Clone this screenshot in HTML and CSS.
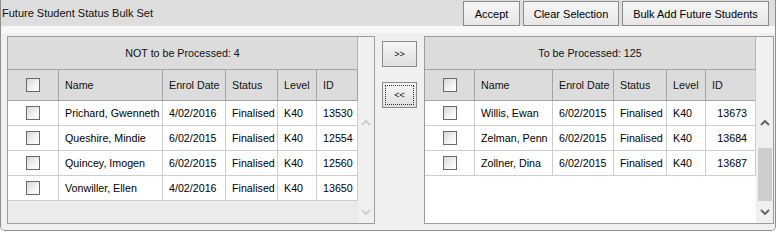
FILE: index.html
```html
<!DOCTYPE html>
<html lang="en">
<head>
<meta charset="utf-8">
<title>Future Student Status Bulk Set</title>
<link rel="stylesheet" href="styles.css">
</head>
<body>
<div class="window">
  <div class="titlebar">
    <span class="title">Future Student Status Bulk Set</span>
    <div class="actions">
      <button class="btn btn-accept">Accept</button>
      <button class="btn btn-clear">Clear Selection</button>
      <button class="btn btn-bulk">Bulk Add Future Students</button>
    </div>
  </div>
  <div class="content">
    <div class="panel panel-left">
      <div class="data data-left">
        <table class="grid">
          <colgroup>
            <col class="c-check-l"><col class="c-name-l"><col class="c-date-l"><col class="c-status-l"><col class="c-level-l"><col class="c-id-l">
          </colgroup>
          <thead>
            <tr class="caption-row"><th colspan="6">NOT to be Processed: 4</th></tr>
            <tr class="head-row">
              <th class="chk"><input type="checkbox" class="cb"></th>
              <th>Name</th><th>Enrol Date</th><th>Status</th><th>Level</th><th class="last">ID</th>
            </tr>
          </thead>
          <tbody>
            <tr><td class="chk"><input type="checkbox" class="cb"></td><td>Prichard, Gwenneth</td><td>4/02/2016</td><td>Finalised</td><td>K40</td><td class="last">13530</td></tr>
            <tr><td class="chk"><input type="checkbox" class="cb"></td><td>Queshire, Mindie</td><td>6/02/2015</td><td>Finalised</td><td>K40</td><td class="last">12554</td></tr>
            <tr><td class="chk"><input type="checkbox" class="cb"></td><td>Quincey, Imogen</td><td>6/02/2015</td><td>Finalised</td><td>K40</td><td class="last">12560</td></tr>
            <tr><td class="chk"><input type="checkbox" class="cb"></td><td>Vonwiller, Ellen</td><td>4/02/2016</td><td>Finalised</td><td>K40</td><td class="last">13650</td></tr>
          </tbody>
        </table>
      </div>
      <div class="scrollbar scrollbar-left disabled">
        <div class="sb-arrow"><svg width="10" height="7" viewBox="0 0 10 7"><polyline points="1,6 5,2 9,6" fill="none" stroke-width="1.6"/></svg></div>
        <div class="sb-track"></div>
        <div class="sb-arrow"><svg width="10" height="7" viewBox="0 0 10 7"><polyline points="1,1 5,5 9,1" fill="none" stroke-width="1.6"/></svg></div>
      </div>
    </div>

    <div class="movers">
      <button class="mv">&gt;&gt;</button>
      <button class="mv focused">&lt;&lt;</button>
    </div>

    <div class="panel panel-right">
      <div class="data data-right">
        <table class="grid">
          <colgroup>
            <col class="c-check-r"><col class="c-name-r"><col class="c-date-r"><col class="c-status-r"><col class="c-level-r"><col class="c-id-r">
          </colgroup>
          <thead>
            <tr class="caption-row"><th colspan="6">To be Processed: 125</th></tr>
            <tr class="head-row">
              <th class="chk"><input type="checkbox" class="cb"></th>
              <th>Name</th><th>Enrol Date</th><th>Status</th><th>Level</th><th class="last">ID</th>
            </tr>
          </thead>
          <tbody>
            <tr><td class="chk"><input type="checkbox" class="cb"></td><td>Willis, Ewan</td><td>6/02/2015</td><td>Finalised</td><td>K40</td><td class="last num">13673</td></tr>
            <tr><td class="chk"><input type="checkbox" class="cb"></td><td>Zelman, Penn</td><td>6/02/2015</td><td>Finalised</td><td>K40</td><td class="last num">13684</td></tr>
            <tr><td class="chk"><input type="checkbox" class="cb"></td><td>Zollner, Dina</td><td>6/02/2015</td><td>Finalised</td><td>K40</td><td class="last num">13687</td></tr>
          </tbody>
        </table>
      </div>
      <div class="scrollbar scrollbar-right">
        <div class="sb-arrow"><svg width="10" height="7" viewBox="0 0 10 7"><polyline points="1,6 5,2 9,6" fill="none" stroke-width="1.8"/></svg></div>
        <div class="sb-track"><div class="sb-thumb"></div></div>
        <div class="sb-arrow"><svg width="10" height="7" viewBox="0 0 10 7"><polyline points="1,1 5,5 9,1" fill="none" stroke-width="1.8"/></svg></div>
      </div>
    </div>
  </div>
</div>
</body>
</html>
```

FILE: styles.css
```css
html, body {
  margin: 0;
  padding: 0;
  background: #ffffff;
}

body {
  font-family: "Liberation Sans", Arial, sans-serif;
  color: #000;
}

.window {
  width: 776px;
  height: 231px;
  box-sizing: border-box;
  border: 1px solid #8e8e8e;
  border-top: none;
  border-radius: 0 0 5px 5px;
  background: #f0f0f0;
  overflow: hidden;
}

/* ---------- title bar ---------- */
.titlebar {
  height: 26px;
  background: #dedede;
  display: flex;
  justify-content: space-between;
  align-items: flex-start;
}

.title {
  padding-left: 1px;
  font-size: 11px;
  line-height: 26px;
  color: #111;
}

.actions {
  display: flex;
  gap: 3px;
  padding-right: 6px;
  margin-top: 1px;
}

.btn {
  height: 25px;
  box-sizing: border-box;
  border: 1px solid #8a8a8a;
  border-radius: 0;
  background: linear-gradient(#f6f6f6, #e6e6e6);
  font-family: "Liberation Sans", Arial, sans-serif;
  font-size: 11px;
  color: #000;
  padding: 0;
  margin: 0;
}

.btn-accept { width: 57px; }
.btn-clear  { width: 96px; }
.btn-bulk   { width: 147px; }

/* ---------- content ---------- */
.content {
  display: flex;
  align-items: flex-start;
  padding: 10px 0 0 6px;
  background: linear-gradient(#f8f8f8 0, #f8f8f8 7px, #f0f0f0 7px);
  height: 204px;
  box-sizing: border-box;
}

.panel {
  display: flex;
  height: 188px;
  box-sizing: border-box;
  border: 1px solid #9c9c9c;
}

.panel-left  { width: 368px; }
.panel-right { width: 350px; }

.data {
  height: 100%;
  overflow: hidden;
}

.data-left {
  width: 350px;
  background: #ebebeb;
}

.data-right {
  width: 331px;
  background: #ffffff;
}

/* ---------- grid table ---------- */
.grid {
  border-collapse: separate;
  border-spacing: 0;
  table-layout: fixed;
  width: 100%;
  font-size: 10.7px;
}

.c-check-l  { width: 51px; }
.c-name-l   { width: 104px; }
.c-date-l   { width: 63px; }
.c-status-l { width: 52px; }
.c-level-l  { width: 39px; }
.c-id-l     { width: 41px; }

.c-check-r  { width: 50px; }
.c-name-r   { width: 78px; }
.c-date-r   { width: 61px; }
.c-status-r { width: 53px; }
.c-level-r  { width: 39px; }
.c-id-r     { width: 50px; }

.grid th,
.grid td {
  padding: 0 0 0 6px;
  text-align: left;
  font-weight: normal;
  white-space: nowrap;
  overflow: hidden;
  box-sizing: border-box;
}

.caption-row th {
  height: 33px;
  background: #dcdcdc;
  text-align: center;
  padding: 0;
  border-bottom: 1px solid #a4a4a4;
  border-right: 1px solid #b4b4b4;
  color: #111;
}

.head-row th {
  height: 31px;
  background: #dcdcdc;
  border-bottom: 1px solid #a4a4a4;
  border-right: 1px solid #a4a4a4;
  color: #111;
}

.grid td {
  height: 25px;
  background: #ffffff;
  border-bottom: 1px solid #cdcdcd;
  border-right: 1px solid #cdcdcd;
}

.data-right .grid td.last,
.data-right .grid th.last {
  border-right: 1px solid #cdcdcd;
}

.grid .chk {
  text-align: center;
  padding: 0;
}

.grid td.num {
  text-align: right;
  padding: 0 8px 0 0;
}

.cb {
  appearance: none;
  -webkit-appearance: none;
  width: 14px;
  height: 14px;
  margin: 0;
  box-sizing: border-box;
  border: 1px solid #6a6a6a;
  background: linear-gradient(135deg, #d6d6d6 0%, #f4f4f4 60%, #ffffff 100%);
  vertical-align: middle;
  display: inline-block;
}

/* ---------- scrollbars ---------- */
.scrollbar {
  display: flex;
  flex-direction: column;
  background: #f0f0f0;
  padding: 77px 0 2px;
  box-sizing: border-box;
  height: 100%;
}

.scrollbar-left  { width: 16px; }
.scrollbar-right { width: 17px; }

.sb-arrow {
  height: 17px;
  display: flex;
  align-items: center;
  justify-content: center;
  flex: 0 0 17px;
}

.scrollbar-right .sb-arrow svg { stroke: #606060; }
.scrollbar-left .sb-arrow svg  { stroke: #c6c6c6; }

.sb-track {
  flex: 1;
  display: flex;
  flex-direction: column;
  align-items: center;
}

.sb-thumb {
  margin-top: 17px;
  width: 14px;
  height: 53px;
  background: #cdcdcd;
}

/* ---------- move buttons ---------- */
.movers {
  width: 49px;
  display: flex;
  flex-direction: column;
  padding: 5px 0 0 7px;
  box-sizing: border-box;
  gap: 15px;
}

.mv {
  width: 35px;
  height: 26px;
  box-sizing: border-box;
  border: 1px solid #8a8a8a;
  border-radius: 0;
  background: linear-gradient(#f6f6f6, #dedede);
  font-family: "Liberation Sans", Arial, sans-serif;
  font-size: 9px;
  color: #111;
  padding: 0;
  margin: 0;
}

.mv.focused {
  outline: 1px dotted #333;
  outline-offset: -4px;
}
```
